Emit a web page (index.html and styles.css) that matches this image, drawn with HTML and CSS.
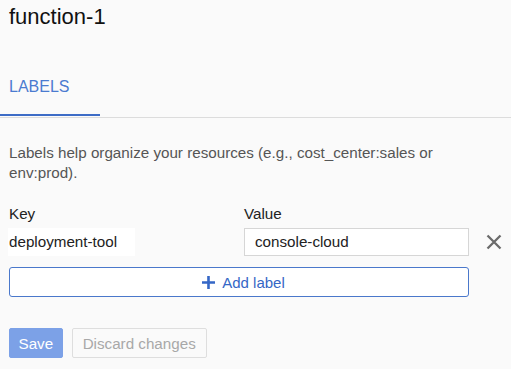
FILE: index.html
```html
<!DOCTYPE html>
<html>
<head>
<meta charset="utf-8">
<link rel="stylesheet" href="styles.css">
</head>
<body>
<h1 class="title">function-1</h1>
<div class="tabbar">
  <div class="tab active">LABELS</div>
</div>
<div class="content">
  <p class="desc">Labels help organize your resources (e.g., cost_center:sales or env:prod).</p>
  <div class="grid">
    <div class="col-label">Key</div>
    <div class="col-label">Value</div>
    <div></div>
    <div class="key-cell"><span class="key-box">deployment-tool</span></div>
    <div class="value-input">console-cloud</div>
    <button class="remove" aria-label="Remove">
      <svg width="16" height="16" viewBox="0 0 16 16"><path d="M1.5 1.5 L14.5 14.5 M14.5 1.5 L1.5 14.5" stroke="#6b6b6b" stroke-width="2.3" fill="none"/></svg>
    </button>
  </div>
  <button class="add-btn">
    <svg width="15" height="15" viewBox="0 0 15 15"><path d="M7.5 1 V14 M1 7.5 H14" stroke="#3567c6" stroke-width="2.6" fill="none"/></svg>
    <span>Add label</span>
  </button>
  <div class="actions">
    <button class="btn save">Save</button>
    <button class="btn discard">Discard changes</button>
  </div>
</div>
</body>
</html>
```

FILE: styles.css
```css
* { box-sizing: border-box; }
body {
  margin: 0;
  background: #fafafa;
  font-family: "Liberation Sans", Arial, sans-serif;
  color: #222;
}
.title {
  margin: 0;
  padding: 3px 0 0 9px;
  font-size: 22px;
  font-weight: normal;
  line-height: 28px;
  color: #111;
}
.tabbar {
  margin-top: 46px;
  border-bottom: 1px solid #dcdcdc;
  display: flex;
}
.tab {
  width: 100px;
  padding: 0 0 17px 9px;
  font-size: 16px;
  line-height: 20px;
  color: #4a7bd0;
  border-bottom: 2px solid #3d6cc6;
  margin-bottom: 1px;
}
.content {
  padding: 25px 9px 0 9px;
  font-size: 15.2px;
}
.desc {
  margin: 0;
  line-height: 20px;
  color: #555;
  width: 440px;
}
.grid {
  margin-top: 21px;
  display: grid;
  grid-template-columns: 235px 225px 42px;
  row-gap: 4px;
  align-items: center;
}
.col-label {
  line-height: 20px;
  color: #222;
}
.key-cell {
  height: 28px;
}
.key-box {
  display: inline-block;
  background: #ffffff;
  line-height: 28px;
  padding: 0 18px 0 1px;
  margin-left: -1px;
  color: #222;
}
.value-input {
  height: 28px;
  border: 1px solid #d6d6d6;
  background: #fff;
  padding: 0 10px;
  line-height: 26px;
  color: #222;
}
.remove {
  border: 0;
  background: none;
  padding: 0;
  margin-left: 17px;
  width: 16px;
  height: 16px;
  display: flex;
}
.add-btn {
  margin-top: 11px;
  width: 460px;
  height: 30px;
  border: 1px solid #4a78cb;
  border-radius: 3px;
  background: #fff;
  display: flex;
  align-items: center;
  justify-content: center;
  gap: 6px;
  font-family: inherit;
  font-size: 15px;
  color: #3567c6;
  padding: 0 0 0 8px;
}
.add-btn svg { display: block; }
.actions {
  margin-top: 31px;
  display: flex;
  gap: 9px;
}
.btn {
  height: 30px;
  font-family: inherit;
  font-size: 15.2px;
  padding: 0 10px;
  border-radius: 2px;
  white-space: nowrap;
}
.save {
  background: #7ca1e7;
  border: 1px solid #7ca1e7;
  color: #fff;
  padding: 0 8.5px;
}
.discard {
  background: #fafafa;
  border: 1px solid #dedede;
  color: #a8a8a8;
}
```
